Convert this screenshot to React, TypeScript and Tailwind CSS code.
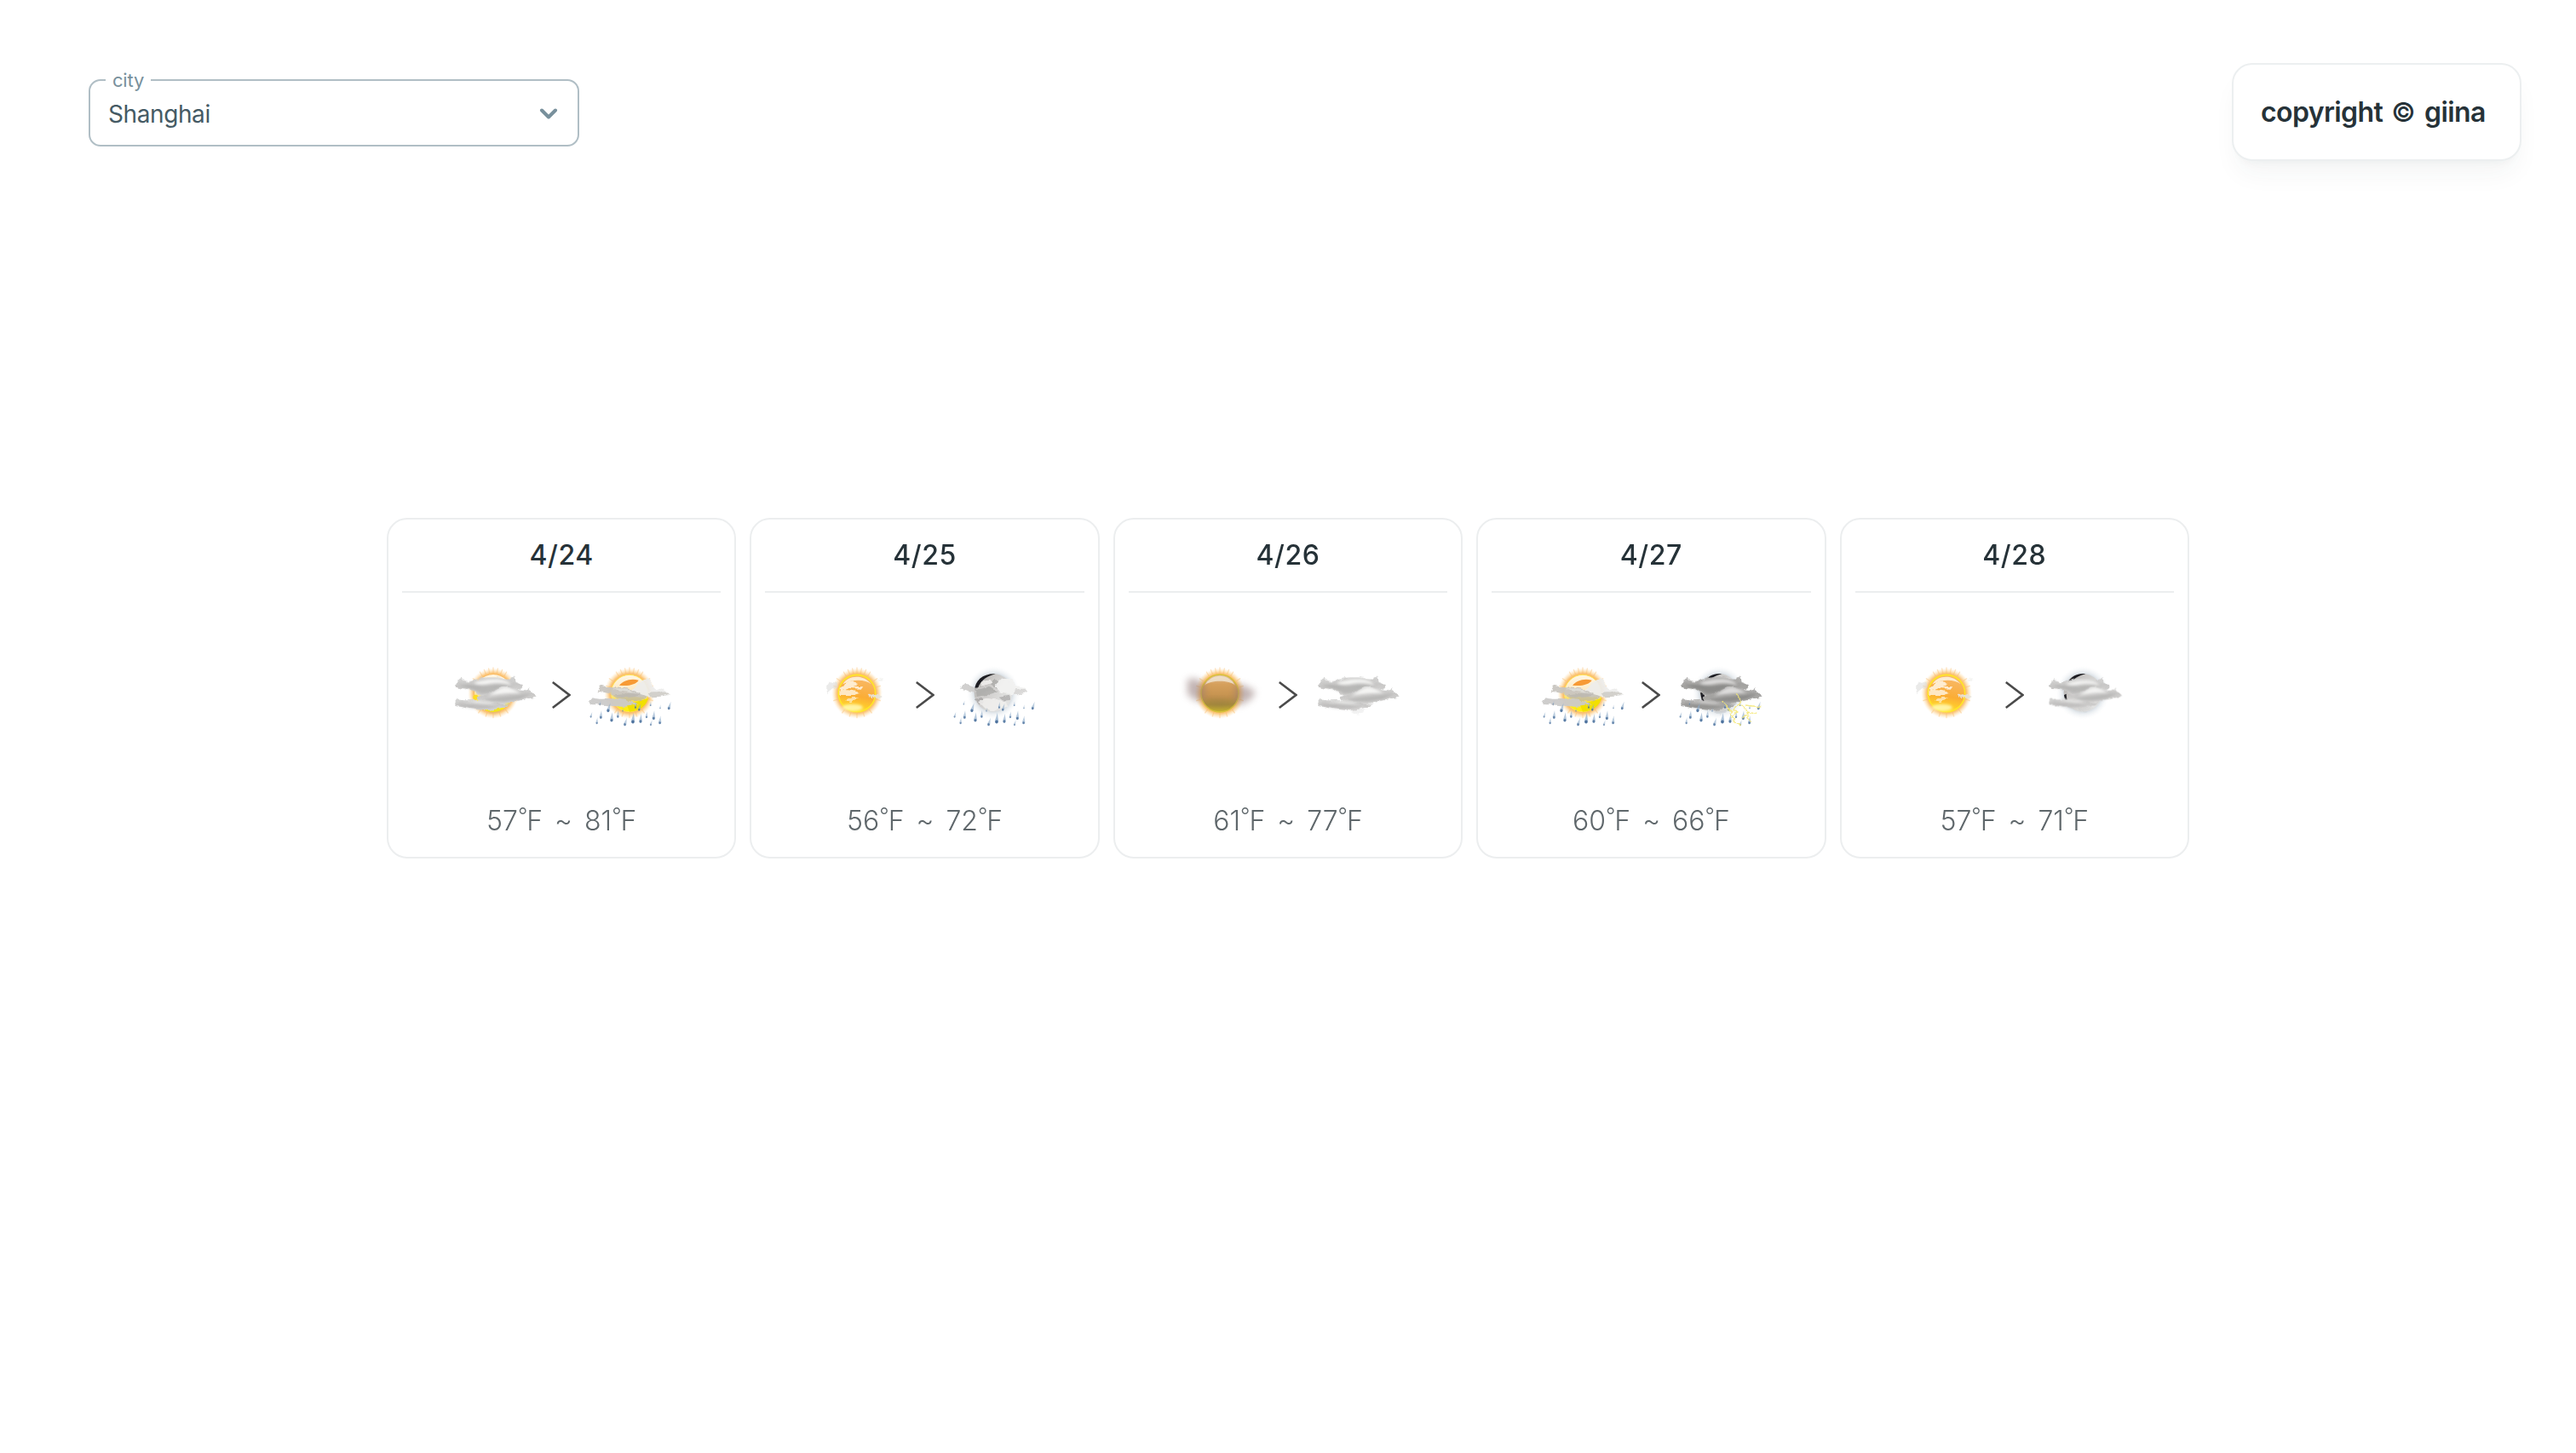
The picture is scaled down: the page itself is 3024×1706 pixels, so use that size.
import React from "react";

type Kind = "cloudySun" | "sunShower" | "sun" | "moonRain" | "haze" | "cloudy" | "moonStorm" | "moonCloud";

const days: { date: string; day: Kind; night: Kind; low: number; high: number }[] = [
  { date: "4/24", day: "cloudySun", night: "sunShower", low: 57, high: 81 },
  { date: "4/25", day: "sun", night: "moonRain", low: 56, high: 72 },
  { date: "4/26", day: "haze", night: "cloudy", low: 61, high: 77 },
  { date: "4/27", day: "sunShower", night: "moonStorm", low: 60, high: 66 },
  { date: "4/28", day: "sun", night: "moonCloud", low: 57, high: 71 },
];

function Defs() {
  return (
    <svg className="absolute h-0 w-0" aria-hidden="true">
      <defs>
        <radialGradient id="glow">
          <stop offset="0.68" stopColor="#f9a836" />
          <stop offset="0.8" stopColor="#fbb95c" stopOpacity="0.75" />
          <stop offset="0.92" stopColor="#fdd9a0" stopOpacity="0.35" />
          <stop offset="1" stopColor="#fff0dc" stopOpacity="0" />
        </radialGradient>
        <linearGradient id="disc" x1="0.2" y1="0" x2="0" y2="1">
          <stop offset="0" stopColor="#f8b868" />
          <stop offset="0.5" stopColor="#fbad35" />
          <stop offset="0.75" stopColor="#ffcd2c" />
          <stop offset="1" stopColor="#fff450" />
        </linearGradient>
        <linearGradient id="pale" x1="0" y1="0" x2="0" y2="1">
          <stop offset="0" stopColor="#fff7e6" />
          <stop offset="0.45" stopColor="#fde9c0" />
          <stop offset="0.7" stopColor="#fde04a" />
          <stop offset="1" stopColor="#fff200" />
        </linearGradient>
        <linearGradient id="hazeDisc" x1="0" y1="0" x2="0" y2="1">
          <stop offset="0" stopColor="#e3c6a4" />
          <stop offset="0.25" stopColor="#d6a05c" />
          <stop offset="0.6" stopColor="#c4924f" />
          <stop offset="0.8" stopColor="#a98d3c" />
          <stop offset="1" stopColor="#c9b52c" />
        </linearGradient>
        <linearGradient id="cloud" x1="0" y1="0" x2="0.1" y2="1">
          <stop offset="0" stopColor="#d9d9d8" />
          <stop offset="0.5" stopColor="#c8c7c6" />
          <stop offset="1" stopColor="#d6d5d4" />
        </linearGradient>
        <linearGradient id="storm" x1="0" y1="0" x2="0.1" y2="1">
          <stop offset="0" stopColor="#bcbbba" />
          <stop offset="0.5" stopColor="#a3a2a0" />
          <stop offset="1" stopColor="#adacaa" />
        </linearGradient>
        <radialGradient id="moonGlow">
          <stop offset="0.6" stopColor="#b7c1ca" />
          <stop offset="0.8" stopColor="#dfe5ea" stopOpacity="0.6" />
          <stop offset="1" stopColor="#f5f7f9" stopOpacity="0" />
        </radialGradient>
        <linearGradient id="moonDisc" x1="0" y1="0.1" x2="0.8" y2="0.7">
          <stop offset="0" stopColor="#a9a7a5" />
          <stop offset="0.4" stopColor="#cbc9c7" />
          <stop offset="1" stopColor="#e2e2e1" />
        </linearGradient>
        <filter id="wisp" x="-20%" y="-30%" width="140%" height="160%">
          <feTurbulence type="fractalNoise" baseFrequency="0.04 0.06" numOctaves="3" seed="4" result="n" />
          <feDisplacementMap in="SourceGraphic" in2="n" scale="15" xChannelSelector="R" yChannelSelector="G" />
          <feGaussianBlur stdDeviation="2" />
        </filter>
        <filter id="soft" x="-30%" y="-30%" width="160%" height="160%">
          <feGaussianBlur stdDeviation="2.2" />
        </filter>
        <filter id="shade" x="-30%" y="-60%" width="160%" height="220%">
          <feGaussianBlur stdDeviation="4.5" />
        </filter>
        <filter id="mist" x="-60%" y="-60%" width="220%" height="220%">
          <feGaussianBlur stdDeviation="13" />
        </filter>
      </defs>
    </svg>
  );
}

function Halo() {
  return (
    <g>
      <circle r="90" fill="url(#glow)" />
      <g stroke="#f9b459" strokeWidth="4" strokeLinecap="round" opacity="0.35" filter="url(#soft)">
        <path d="M0-72V-90M-13-71l-3-16M13-71l3-16M-26-68l-6-15M26-68l6-15M-39-62l-8-13M39-62l8-13M0 72v14M-22 69l-4 12M22 69l4 12M-44 58l-8 11M44 58l8 11M-60-44l-11-8M60-44l11-8M-70-22l-12-4M70-22l12-4M70 22l12 4M-70 22l-12 4" />
      </g>
    </g>
  );
}

function Clouds({ dark = false }: { dark?: boolean }) {
  const fill = dark ? "url(#storm)" : "url(#cloud)";
  const shade = dark ? "#7a7978" : "#a9a8a7";
  const shine = dark ? "#dddcdb" : "#f4f4f3";
  return (
    <g>
      <g filter="url(#wisp)" fill={fill}>
        <path d="M-132-28 L-126-42 L-112-56 L-104-46 C-92-42-86-40-74-44 C-52-50-32-57 0-56 C28-58 42-46 60-50 L76-62 L80-42 C100-32 112-22 94-14 C60-6 20 6-40 10 C-56 4-62-10-104-17 L-124-18Z" />
        <path fill={shade} opacity=".15" d="M-22 58 L34 54 L22 70 L6 77Z" />
      </g>
      <g filter="url(#shade)">
        <path fill={shine} d="M-70-36 C-40-46-10-52 26-48 C50-44 60-36 62-28 C40-38 10-38-14-34 C-30-30-50-28-70-36Z" />
        <path fill={shade} opacity=".6" d="M-120-28 C-80-34-50-26-20-26 C10-30 40-34 70-22 C40-10-10 4-46 2 C-56-12-90-18-120-28Z" />
      </g>
      <g filter="url(#wisp)" fill={fill}>
        <path d="M-56 12 C-20 4 4-12 30-24 C58-26 86-8 106-10 L126-18 L134-6 L152 14 C130 16 110 22 84 28 C50 38 6 40-24 32 C-50 28-62 20-56 12Z" />
      </g>
      <g filter="url(#shade)">
        <path fill={shine} d="M-18 8 C6-4 20-20 44-22 C66-18 84-8 96 0 C60-4 20 4-18 8Z" />
        <path fill={shade} opacity=".6" d="M-40 22 C10 14 60 10 132 2 C100 26 20 40-40 22Z" />
      </g>
      <g filter="url(#wisp)" fill={fill}>
        <path d="M-134 30 L-128 20 C-110 28-90 24-70 24 C-34 26 0 34 58 38 C44 50 10 56-20 61 C-56 58-108 50-134 44Z" />
      </g>
      <g filter="url(#shade)">
        <path fill={shine} opacity=".8" d="M-90 28 C-50 24-20 30 10 36 C-20 40-60 36-90 28Z" />
        <path fill={shade} opacity=".5" d="M-128 40 C-90 40-40 44 20 46 C-30 62-90 54-128 40Z" />
      </g>
    </g>
  );
}

function ThinClouds() {
  return (
    <g filter="url(#wisp)">
      <path fill="#ededec" opacity=".93" d="M-6-2 L18-22 C34-34 40-50 66-50 C84-42 76-18 98-12 L118-20 L142 6 C110 12 60 18 20 12Z" />
      <path fill="#c8c5c0" opacity=".93" d="M-112-6 L-102-30 C-80-20-60-26-40-22 C-10-20 20-12 40 4 C20 16-10 18-40 12 C-50 4-80-2-112-6Z" />
      <path fill="#b9b5ad" opacity=".7" d="M-64 6 C-10-4 30-2 60 14 C40 30 0 32-40 20Z" />
      <path fill="#e6e4e0" opacity=".7" d="M-60-16 C-30-20 0-14 20-2 C-10-4-40-6-60-16Z" />
      <path fill="#cbcac9" opacity=".95" d="M-142 30 L-130 16 C-100 26-70 16-40 20 C-10 24 10 30 30 36 C10 46-20 50-44 46 C-70 44-110 38-140 40Z" />
      <path fill="#cfcdc8" opacity=".9" d="M62-2 C84-8 110-4 138-4 C126 14 96 12 74 12Z" />
    </g>
  );
}

const drops: [number, number, number][] = [
  [-136, 82, 0.7], [-115, 104, 0.8], [-101, 84, 1], [-75, 60, 1.15], [-63, 94, 1.15], [-41, 81, 0.9],
  [-16, 109, 1], [12, 99, 1.3], [21, 49, 0.8], [34, 57, 0.9], [39, 98, 1.1], [60, 83, 0.8],
  [75, 110, 0.7], [85, 87, 1.1], [107, 103, 1], [139, 52, 1], [74, 42, 0.6], [108, 52, 0.5], [-104, 38, 0.5], [-24, 62, 0.5],
];

function Rain() {
  return (
    <g>
      {drops.map(([x, y, s], i) => (
        <g key={i} transform={`translate(${x} ${y}) scale(${s}) rotate(${i % 3 === 0 ? 16 : 5})`} opacity={0.4 + s * 0.4}>
          <path d="M0-24 C1-14 5-6 5 0 A5 5 0 0 1-5 0 C-5-5-1-14 0-24Z" fill="#8eabc9" opacity=".75" />
          <ellipse cy="1" rx="3.8" ry="4.6" fill="#3f6796" />
        </g>
      ))}
    </g>
  );
}

function Moon({ crescent = "M-52-36 C-40-60-14-70 10-66 C-14-60-34-50-44-30Z M-66 8 L-58 4 C-58 14-56 22-54 28 L-62 28Z" }: { crescent?: string }) {
  return (
    <g transform="translate(0 -2)">
      <circle r="94" fill="url(#moonGlow)" />
      <circle r="67" fill="url(#moonDisc)" filter="url(#soft)" />
      <path d={crescent} fill="#1f1f22" filter="url(#soft)" />
    </g>
  );
}

function Sun() {
  return (
    <g>
      <Halo />
      <circle r="65" fill="url(#disc)" stroke="#ffe628" strokeWidth="5" />
      <path d="M-50-32 C-34-62 22-70 50-32 C30-48-10-52-50-32Z" fill="#fff6e4" opacity=".85" filter="url(#soft)" />
      <ellipse cy="50" cx="-16" rx="36" ry="12" fill="#fffbc0" opacity=".8" filter="url(#shade)" />
      <g filter="url(#wisp)" fill="#fff6e6">
        <path opacity=".85" d="M-58-22 C-40-32-30-44-10-40 L4-32 L-14-28 L22-26 L14-16 L-30-18 L-58-6Z" />
        <path opacity=".8" d="M-62-6 C-40-16-14-10 12 0 L-8 6 L-62 6Z" />
        <path opacity=".65" d="M-42 28 L-14 12 L8 18 L-12 24 L-20 34Z" />
        <path fill="#dcdcda" opacity=".6" d="M-108-20 L-96-42 L-70-36 L-66-20 L-86-14 L-104 0Z" />
        <path fill="#e8e4dd" opacity=".9" d="M38 6 L64 2 L92 10 L76 18 L44 14Z" />
        <path fill="#ececea" opacity=".6" d="M70-46 L92-58 L90-46Z" />
      </g>
    </g>
  );
}

function Art({ kind }: { kind: Kind }) {
  switch (kind) {
    case "sun":
      return <Sun />;
    case "cloudySun":
      return (
        <>
          <Halo />
          <circle r="66" fill="url(#pale)" />
          <circle cx="-62" cy="14" r="9" fill="#fddc20" filter="url(#soft)" />
          <Clouds />
        </>
      );
    case "sunShower":
      return (
        <>
          <Halo />
          <circle r="65" fill="url(#pale)" stroke="#ffe45a" strokeWidth="3" />
          <path d="M-36-28 C-24-44 4-54 32-46 C24-32-2-24-36-28Z" fill="#f79a35" filter="url(#soft)" />
          <path d="M-10 40 L66 18 C60 40 40 62 0 65Z" fill="#f2e000" filter="url(#soft)" />
          <ThinClouds />
          <Rain />
        </>
      );
    case "haze":
      return (
        <>
          <Halo />
          <circle r="66" fill="url(#hazeDisc)" stroke="#d8c23a" strokeWidth="4" />
          <path d="M-54-28 A61 61 0 0 1 54-28 C34-48-34-48-54-28Z" fill="#f0e4d0" opacity=".85" filter="url(#soft)" />
          <path d="M-50 26 C-20 14 24 34 54 22 C40 54-34 54-50 26Z" fill="#8f7540" opacity=".5" filter="url(#mist)" />
          <g filter="url(#mist)" fill="#8f7572" opacity=".55">
            <path d="M-114-48 C-96-56-70-50-56-30 L-56 26 C-76 38-100 14-114 4Z" />
            <path d="M56-30 C84-38 104-14 124-8 C122 16 96 36 56 44Z" />
          </g>
        </>
      );
    case "cloudy":
      return <Clouds />;
    case "moonCloud":
      return (
        <>
          <Moon />
          <g transform="translate(2 -1) scale(.9)">
            <Clouds />
          </g>
        </>
      );
    case "moonRain":
      return (
        <>
          <Moon crescent="M-66-8 C-64-44-36-68 8-66 C-20-60-44-44-54-16Z" />
          <g filter="url(#wisp)">
            <path fill="#c9c8c7" d="M-118-18 L-98-36 L-62-22 L-14-28 L6-10 L-58 0 L-90-6Z" opacity=".85" />
            <path fill="#9f9e9d" opacity=".6" d="M-60-12 L-12-24 L16-6 L-20 6 L-58 12Z M8-52 L24-38 L14-18 L-10-36Z" />
            <path fill="#8f8e8d" opacity=".5" d="M-62 20 L-40 14 L-36 34 L-50 40Z M20 14 L54 8 L60 24 L34 26Z" />
            <path fill="#f1f0ef" opacity=".85" d="M-54 30 L-20 18 L40 26 L54 44 L0 62 L-34 50Z M-46-36 L-12-48 L-2-38 L-34-26Z" />
            <path fill="#f2f2f1" opacity=".97" d="M8-30 L30-52 C54-54 76-48 80-24 L114-18 L110-6 L70 4 L26 0Z" />
            <path fill="#d3d2d1" opacity=".8" d="M74-14 L116-16 L124-6 L96 4 L72 2Z" />
          </g>
          <Rain />
        </>
      );
    case "moonStorm":
      return (
        <>
          <Moon crescent="M-52-36 C-40-60-14-70 10-66 C-14-60-34-50-44-30Z M-66 0 L-52 0 L-50 32 L-60 30Z" />
          <Clouds dark />
          <Rain />
          <g fill="none" stroke="#f5e878" strokeWidth="4.5" strokeLinejoin="round" opacity=".85" filter="url(#wisp)">
            <path d="M58-2 L80 30 L72 34 L104 66 L96 70 L112 102M14 30 L44 66 L38 70 L56 94 L50 98 L76 114M72 34 L50 62 L66 66 L42 86M104 66 L82 88M90 42 L148 48M104 66 L132 74" />
          </g>
        </>
      );
  }
}

function WeatherIcon({ kind }: { kind: Kind }) {
  return (
    <svg viewBox="-180 -126 360 252" className="h-[84px] w-[120px] shrink-0" role="img">
      <Art kind={kind} />
    </svg>
  );
}

function Temp({ value }: { value: number }) {
  return (
    <span className="flex">
      {value}
      <span className="-mt-[6px] -mr-px text-[25px]">°</span>F
    </span>
  );
}

export default function App() {
  return (
    <div className="min-h-[1706px] w-full bg-white font-[Inter,sans-serif]">
      <Defs />
      <header className="flex h-[608px] items-start justify-between pt-[74px] pr-16 pl-[104px]">
        <div className="relative mt-[19px] flex h-[79px] w-[576px] items-center justify-between rounded-[14px] border-2 border-[#b0bec5] pr-[23px] pl-[21px]">
          <span className="absolute -top-[15px] left-[18px] bg-white px-2 text-[22px] leading-7 tracking-[-0.2px] text-[#78909c]">city</span>
          <span className="pt-[3px] text-[28px] leading-10 tracking-[-0.4px] text-[#455a64]">Shanghai</span>
          <svg viewBox="0 0 22 14" className="mt-0.5 h-3.5 w-[22px]" fill="none" stroke="#78909c" strokeWidth="4" strokeLinecap="round" strokeLinejoin="round">
            <path d="M3 2.5 L11 10.5 L19 2.5" />
          </svg>
        </div>
        <div className="flex h-[115px] w-[340px] items-center rounded-3xl border-2 border-[#eceff0] bg-white pl-8 shadow-[0_20px_30px_-6px_rgba(38,50,56,0.05),0_8px_12px_-8px_rgba(38,50,56,0.05)]">
          <p className="flex items-center text-[32px] leading-10 font-semibold tracking-[-0.6px] text-[#263238]">
            <span>copyright</span>
            <span className="mr-[11px] ml-[10px] text-[31px] font-medium">©</span>
            <span>giina</span>
          </p>
        </div>
      </header>
      <main className="mx-auto grid w-[2116px] grid-cols-5 gap-4">
        {days.map((d) => (
          <section key={d.date} className="flex h-[400px] flex-col items-center rounded-3xl border-2 border-[#eceeef] px-4">
            <h2 className="flex h-[86px] w-full items-center justify-center border-b-2 border-[#eceeef] text-[32px] leading-10 font-medium tracking-[0.6px] text-[#263238]">{d.date}</h2>
            <div className="flex h-[236px] items-center gap-[9px]">
              <WeatherIcon kind={d.day} />
              <svg viewBox="0 0 22 34" className="mt-1 h-[34px] w-[22px]" fill="none" stroke="#4a4a4a" strokeWidth="2.6">
                <path d="M.8 2 L20.4 17 L.8 32" />
              </svg>
              <WeatherIcon kind={d.night} />
            </div>
            <p className="flex gap-3.5 pt-[3px] text-[32px] leading-[58px] font-[350] text-[#5f676b]">
              <Temp value={d.low} />
              <span>~</span>
              <Temp value={d.high} />
            </p>
          </section>
        ))}
      </main>
    </div>
  );
}
